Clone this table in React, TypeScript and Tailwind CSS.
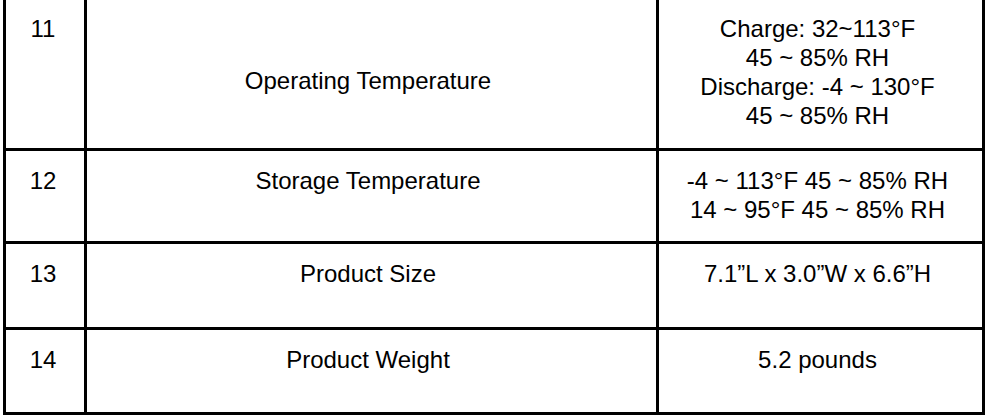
import React from "react";

type Row = {
  n: string;
  name: string;
  value: string[];
  h: string;
  padTop: string;
  namePad: string;
};

const rows: Row[] = [
  {
    n: "11",
    name: "Operating Temperature",
    value: ["Charge: 32~113°F", "45 ~ 85% RH", "Discharge: -4 ~ 130°F", "45 ~ 85% RH"],
    h: "h-[151px]",
    padTop: "pt-[14px]",
    namePad: "pt-[66px]",
  },
  {
    n: "12",
    name: "Storage Temperature",
    value: ["-4 ~ 113°F 45 ~ 85% RH", "14 ~ 95°F 45 ~ 85% RH"],
    h: "h-[93px]",
    padTop: "pt-[15px]",
    namePad: "pt-[15px]",
  },
  {
    n: "13",
    name: "Product Size",
    value: ["7.1”L x 3.0”W x 6.6”H"],
    h: "h-[86px]",
    padTop: "pt-[15px]",
    namePad: "pt-[15px]",
  },
  {
    n: "14",
    name: "Product Weight",
    value: ["5.2 pounds"],
    h: "h-[85px]",
    padTop: "pt-[15px]",
    namePad: "pt-[15px]",
  },
];

export default function App() {
  return (
    <div
      className="w-[987px] h-[416px] bg-white overflow-hidden text-black text-[24px] leading-[29px]"
      style={{ fontFamily: '"Liberation Sans", Arial, sans-serif' }}
    >
      <div className="ml-[3px] w-[982px] flex flex-col">
        {rows.map((r) => (
          <div key={r.n} className={`flex border-b-[3px] border-black ${r.h}`}>
            <div className={`w-[81px] border-l-[3px] border-black text-center pr-[4px] ${r.padTop}`}>
              {r.n}
            </div>
            <div className={`w-[572px] border-l-[3px] border-black text-center pr-[7px] ${r.namePad}`}>
              {r.name}
            </div>
            <div className={`w-[329px] border-l-[3px] border-r-[3px] border-black text-center pr-[6px] ${r.padTop}`}>
              {r.value.map((v, i) => (
                <div key={i}>{v}</div>
              ))}
            </div>
          </div>
        ))}
      </div>
    </div>
  );
}
